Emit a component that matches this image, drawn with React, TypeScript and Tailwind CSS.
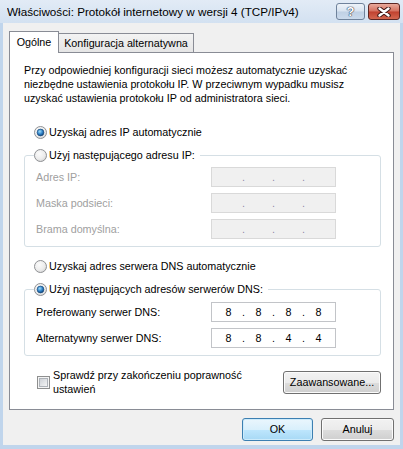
import React from 'react';

function Radio({ checked }: { checked?: boolean }) {
  return (
    <svg width="13" height="13" viewBox="0 0 13 13" className="shrink-0">
      <defs>
        <radialGradient id="radio-bg" cx="0.4" cy="0.35" r="0.75">
          <stop offset="0" stopColor="#fbfbfb" />
          <stop offset="0.6" stopColor="#ececec" />
          <stop offset="1" stopColor="#cfcfcf" />
        </radialGradient>
        <radialGradient id="radio-dot" cx="0.4" cy="0.35" r="0.7">
          <stop offset="0" stopColor="#9fdcf9" />
          <stop offset="0.55" stopColor="#2f82c8" />
          <stop offset="1" stopColor="#0c3c70" />
        </radialGradient>
      </defs>
      <circle cx="6.5" cy="6.5" r="6" fill="url(#radio-bg)" stroke="#8f9194" />
      {checked && <circle cx="6.5" cy="6.5" r="3.4" fill="url(#radio-dot)" stroke="#1a4b7c" strokeWidth="0.7" />}
    </svg>);

}

function Checkbox() {
  return (
    <svg width="13" height="13" viewBox="0 0 13 13" className="shrink-0">
      <defs>
        <linearGradient id="check-bg" x1="0" y1="0" x2="1" y2="1">
          <stop offset="0" stopColor="#cbcfd5" />
          <stop offset="1" stopColor="#f6f6f6" />
        </linearGradient>
      </defs>
      <rect x="0.5" y="0.5" width="12" height="12" fill="#f4f4f4" stroke="#8e8f8f" />
      <rect x="2.5" y="2.5" width="8" height="8" fill="url(#check-bg)" stroke="#aeb3b9" />
    </svg>);

}

// four octets with dots between, like the Windows IP address control
function IpBox({ value, disabled }: { value?: string[]; disabled?: boolean }) {
  const octets = value ?? ['', '', '', ''];
  return (
    <div
      className={
      disabled ?
      'w-[125px] h-[20px] border border-[#d9d9d9] bg-[#f0f0f0] flex items-center pl-[4px] text-[#9089a8]' :
      'w-[125px] h-[20px] border border-[#c2c4c8] bg-white flex items-center pl-[4px] text-black'
      }>
      {octets.map((o, i) =>
      <React.Fragment key={i}>
          {i > 0 && <span className="w-[5px] text-center">.</span>}
          <span className="w-[25px] text-center text-black">{o}</span>
        </React.Fragment>
      )}
    </div>);

}

function Field({ label, value, disabled }: { label: string; value?: string[]; disabled?: boolean }) {
  return (
    <div className="flex items-center h-[20px]">
      <span className={disabled ? 'w-[177px] pl-[2px] text-[#a0a0a0]' : 'w-[177px] pl-[2px] text-black'}>{label}</span>
      <IpBox value={value} disabled={disabled} />
    </div>);

}

function Button({ children, primary, width }: { children: React.ReactNode; primary?: boolean; width: string }) {
  return (
    <button
      className={`${width} h-[23px] rounded-[3px] text-black leading-none ${
      primary ?
      'border border-[#3c7fb1] bg-[linear-gradient(to_bottom,#eaf6fd_0%,#d9f0fc_50%,#bee6fd_51%,#a7d9f5_100%)] shadow-[inset_0_0_0_1px_#cdebfb]' :
      'border border-[#707070] bg-[linear-gradient(to_bottom,#f2f2f2_0%,#ebebeb_50%,#dddddd_51%,#cfcfcf_100%)] shadow-[inset_0_0_0_1px_#fbfbfb]'}`
      }>
      {children}
    </button>);

}

function TitleBar() {
  return (
    <div className="h-[23px] flex items-start bg-[linear-gradient(to_bottom,#e2ebf6,#d3e1f1)] pl-[7px] pr-[3px]">
      <div className="flex-1 pt-[5px] text-[11.7px] leading-[14px] text-black truncate">
        Właściwości: Protokół internetowy w wersji 4 (TCP/IPv4)
      </div>
      <div className="flex gap-[3px] pt-[3px]">
        <div className="w-[29px] h-[17px] rounded-[3px] border border-[#6f829b] bg-[linear-gradient(to_bottom,#eef3f9_0%,#d8e3f0_48%,#bfd0e4_52%,#cbdaec_100%)] flex items-center justify-center">
          <span className="text-[13px] font-bold leading-none text-white [text-shadow:0_0_1px_#2c3b52,0_0_1px_#2c3b52,0_0_1px_#2c3b52]">?</span>
        </div>
        <div className="w-[32px] h-[17px] rounded-[3px] border border-[#5b2623] bg-[linear-gradient(to_bottom,#e9a99b_0%,#d4705f_48%,#c0412f_52%,#d3664f_100%)] flex items-center justify-center">
          <svg width="14" height="10" viewBox="0 0 14 10">
            <path d="M2.5 1.5 L11.5 8.5 M11.5 1.5 L2.5 8.5" stroke="#3d1412" strokeWidth="4.4" strokeLinecap="round" />
            <path d="M2.5 1.5 L11.5 8.5 M11.5 1.5 L2.5 8.5" stroke="#ffffff" strokeWidth="2.4" strokeLinecap="round" />
          </svg>
        </div>
      </div>
    </div>);

}

export default function App() {
  return (
    <div className="w-[403px] h-[449px] bg-[#c0d5ec] flex flex-col font-['Liberation_Sans',Arial,sans-serif] text-[10.75px] text-black">
      <TitleBar />
      <div className="flex-1 mx-[3px] mb-[4px] bg-[#f0f0f0] flex flex-col px-[6px] pt-[8px]">
        {/* tab strip */}
        <div className="flex items-end h-[21px]">
          <div className="relative z-10 w-[50px] h-[22px] -mb-px border border-b-0 border-[#898c95] bg-white flex items-center justify-center">
            Ogólne
          </div>
          <div className="w-[136px] h-[19px] -ml-px border border-b-0 border-[#898c95] bg-[linear-gradient(to_bottom,#f3f3f3,#e5e5e5)] flex items-center justify-center">
            Konfiguracja alternatywna
          </div>
        </div>

        {/* tab page */}
        <div className="w-[385px] h-[358px] border border-[#898c95] bg-white pl-[14px] pt-[10px]">
          <p className="leading-[14px]">
            Przy odpowiedniej konfiguracji sieci możesz automatycznie uzyskać
            <br />
            niezbędne ustawienia protokołu IP. W przeciwnym wypadku musisz
            <br />
            uzyskać ustawienia protokołu IP od administratora sieci.
          </p>

          <div className="mt-[20px] pl-[10px] flex items-center gap-[2px] h-[14px]">
            <Radio checked />
            <span>Uzyskaj adres IP automatycznie</span>
          </div>

          <fieldset className="mt-[9px] w-[357px] border border-[#d5dfe5] rounded-[3px] pl-[9px] pb-[7px]">
            <legend className="flex items-center gap-[2px] h-[14px] pr-[5px]">
              <Radio />
              <span>Użyj następującego adresu IP:</span>
            </legend>
            <div className="mt-[5px] flex flex-col gap-[6px]">
              <Field label="Adres IP:" disabled />
              <Field label="Maska podsieci:" disabled />
              <Field label="Brama domyślna:" disabled />
            </div>
          </fieldset>

          <div className="mt-[12px] pl-[10px] flex items-center gap-[2px] h-[14px]">
            <Radio />
            <span>Uzyskaj adres serwera DNS automatycznie</span>
          </div>

          <fieldset className="mt-[9px] w-[357px] border border-[#d5dfe5] rounded-[3px] pl-[9px] pb-[7px]">
            <legend className="flex items-center gap-[2px] h-[14px] pr-[5px]">
              <Radio checked />
              <span>Użyj następujących adresów serwerów DNS:</span>
            </legend>
            <div className="mt-[6px] flex flex-col gap-[6px]">
              <Field label="Preferowany serwer DNS:" value={['8', '8', '8', '8']} />
              <Field label="Alternatywny serwer DNS:" value={['8', '8', '4', '4']} />
            </div>
          </fieldset>

          <div className="mt-[12px] w-[357px] flex items-center justify-between">
            <div className="pl-[13px] flex items-center gap-[3px]">
              <Checkbox />
              <span className="leading-[14px]">
                Sprawdź przy zakończeniu poprawność
                <br />
                ustawień
              </span>
            </div>
            <Button width="w-[98px]">Zaawansowane...</Button>
          </div>
        </div>

        <div className="mt-[8px] flex justify-end gap-[8px]">
          <Button primary width="w-[71px]">
            OK
          </Button>
          <Button width="w-[73px]">Anuluj</Button>
        </div>
      </div>
    </div>);

}
